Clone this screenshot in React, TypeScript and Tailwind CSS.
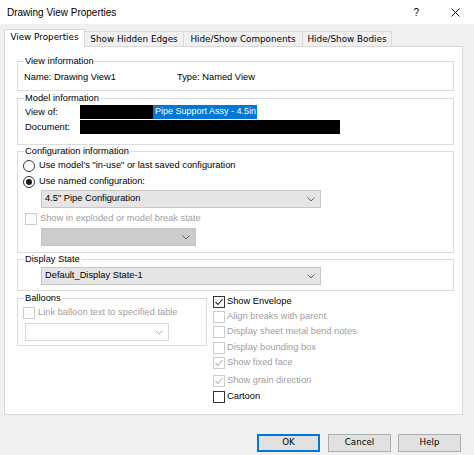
import type { ReactNode } from 'react';

const tabs = ['View Properties', 'Show Hidden Edges', 'Hide/Show Components', 'Hide/Show Bodies'];
const tabWidths = ['w-[81px]', 'w-[100px]', 'w-[120px]', 'w-[90px]'];

const options = [
  { label: 'Show Envelope', checked: true, disabled: false, gap: 'mt-0' },
  { label: 'Align breaks with parent', checked: false, disabled: true, gap: 'mt-[1px]' },
  { label: 'Display sheet metal bend notes', checked: false, disabled: true, gap: 'mt-[1px]' },
  { label: 'Display bounding box', checked: false, disabled: true, gap: 'mt-[2px]' },
  { label: 'Show fixed face', checked: true, disabled: true, gap: 'mt-[1px]' },
  { label: 'Show grain direction', checked: true, disabled: true, gap: 'mt-[4px]' },
  { label: 'Cartoon', checked: false, disabled: false, gap: 'mt-[2px]' },
];

function Chevron({ color = '#606060' }: { color?: string }) {
  return (
    <svg width="8" height="5" viewBox="0 0 8 5" className="shrink-0">
      <polyline points="0.5,0.5 4,4 7.5,0.5" fill="none" stroke={color} strokeWidth="1" />
    </svg>
  );
}

function CheckBox({ checked, disabled }: { checked: boolean; disabled: boolean }) {
  return (
    <span
      className={`flex h-[12px] w-[12px] shrink-0 items-center justify-center border bg-white ${
        disabled ? 'border-[#cccccc]' : 'border-[#333333]'
      }`}
    >
      {checked && (
        <svg width="10" height="10" viewBox="0 0 10 10">
          <polyline
            points="1.5,5 4,7.5 8.5,2"
            fill="none"
            stroke={disabled ? '#b5b5b5' : '#222'}
            strokeWidth="1.1"
          />
        </svg>
      )}
    </span>
  );
}

function Radio({ selected }: { selected: boolean }) {
  return (
    <span className="flex h-[12px] w-[12px] shrink-0 items-center justify-center rounded-full border border-[#333333] bg-white">
      {selected && <span className="h-[6px] w-[6px] rounded-full bg-[#1a1a1a]" />}
    </span>
  );
}

function Group({ title, className, children }: { title: string; className: string; children?: ReactNode }) {
  return (
    <fieldset className={`border border-[#dcdcdc] ${className}`}>
      <legend className="ml-[6px] px-[1px] leading-[12px]">{title}</legend>
      {children}
    </fieldset>
  );
}

function Select({ value, className }: { value?: string; className: string }) {
  return (
    <div className={`flex h-[18px] items-center justify-between border pl-[3px] pr-[5px] ${className}`}>
      <span>{value}</span>
      <Chevron />
    </div>
  );
}

export default function App() {
  return (
    <div className="flex h-[455px] w-[474px] flex-col overflow-hidden bg-[#f0f0f0] font-['Liberation_Sans',Arial,sans-serif] text-[9.3px] text-black">
      <div className="flex h-[24px] shrink-0 items-center bg-white pl-[7px] pr-[14px] text-[10px]">
        <span className="flex-1">Drawing View Properties</span>
        <span className="mr-[32px] text-[10px]">?</span>
        <svg width="9" height="9" viewBox="0 0 9 9">
          <path d="M0.5 0.5 L8.5 8.5 M8.5 0.5 L0.5 8.5" stroke="#111" strokeWidth="1" />
        </svg>
      </div>

      <div className="mt-[5px] flex h-[18px] items-end pl-[4px] font-['DejaVu_Sans',Verdana,sans-serif] text-[8.8px]">
        {tabs.map((t, i) =>
          i === 0 ? (
            <div
              key={t}
              className={`relative z-10 flex h-[18px] ${tabWidths[i]} items-center justify-center border border-b-0 border-[#d9d9d9] bg-white pb-[1px]`}
            >
              {t}
            </div>
          ) : (
            <div
              key={t}
              className={`-ml-[1px] flex h-[16px] ${tabWidths[i]} items-center justify-center border border-b-0 border-[#d9d9d9] bg-[#f0f0f0]`}
            >
              {t}
            </div>
          )
        )}
      </div>

      <div className="-mt-[1px] ml-[4px] flex h-[369px] w-[459px] flex-col border border-[#d9d9d9] bg-white pl-[12px] pr-[8px] pt-[8px]">
        <Group title="View information" className="h-[36px]">
          <div className="mt-[4px] flex h-[14px] items-center pl-[6px]">
            <span className="w-[153px]">Name: Drawing View1</span>
            <span>Type: Named View</span>
          </div>
        </Group>

        <Group title="Model information" className="mt-[1px] h-[53px]">
          <div className="flex h-[15px] items-center pl-[7px]">
            <span className="w-[55px] pt-[3px]">View of:</span>
            <span className="h-[14px] w-[73px] bg-black" />
            <span className="flex h-[14px] min-w-[104px] items-center whitespace-nowrap bg-[#0078d7] pl-[2px] pr-[1px] text-[9px] text-white">
              Pipe Support Assy - 4.5in
            </span>
          </div>
          <div className="flex h-[15px] items-center pl-[7px]">
            <span className="w-[55px] pt-[3px]">Document:</span>
            <span className="h-[14px] w-[260px] bg-black" />
          </div>
        </Group>

        <Group title="Configuration information" className="h-[108px]">
          <div className="mt-[2px] flex h-[14px] items-center gap-[4px] pl-[5px]">
            <Radio selected={false} />
            <span>Use model's "in-use" or last saved configuration</span>
          </div>
          <div className="mt-[2px] flex h-[14px] items-center gap-[4px] pl-[5px]">
            <Radio selected />
            <span>Use named configuration:</span>
          </div>
          <Select value={'4.5" Pipe Configuration'} className="ml-[23px] mt-[1px] w-[280px] border-[#c6c6c6] bg-[#e5e5e5]" />
          <div className="mt-[4px] flex h-[14px] items-center gap-[3px] pl-[7px] text-[#a0a0a0]">
            <CheckBox checked={false} disabled />
            <span>Show in exploded or model break state</span>
          </div>
          <Select className="ml-[23px] mt-[2px] w-[155px] border-[#c4c4c4] bg-[#cccccc]" />
        </Group>

        <Group title="Display State" className="h-[38px]">
          <Select value="Default_Display State-1" className="ml-[23px] mt-[2px] w-[280px] border-[#c6c6c6] bg-[#e5e5e5]" />
        </Group>

        <div className="mt-[1px] flex">
          <Group title="Balloons" className="h-[54px] w-[190px] shrink-0">
            <div className="mt-[2px] flex h-[14px] items-center gap-[3px] pl-[5px] text-[#a0a0a0]">
              <CheckBox checked={false} disabled />
              <span>Link balloon text to specified table</span>
            </div>
            <div className="ml-[7px] mt-[3px] flex h-[18px] w-[144px] items-center justify-end border border-[#d9d9d9] bg-white pr-[5px]">
              <Chevron color="#b0b0b0" />
            </div>
          </Group>

          <div className="ml-[6px] flex flex-col pt-[3px]">
            {options.map((o) => (
              <div
                key={o.label}
                className={`flex h-[14px] items-center gap-[2px] ${o.gap} ${o.disabled ? 'text-[#a0a0a0]' : ''}`}
              >
                <CheckBox checked={o.checked} disabled={o.disabled} />
                <span>{o.label}</span>
              </div>
            ))}
          </div>
        </div>
      </div>

      <div className="mt-[19px] flex justify-end pr-[13px] font-['DejaVu_Sans',Verdana,sans-serif] text-[8.7px]">
        <button className="flex h-[18px] w-[63px] items-center justify-center border-2 border-[#0078d7] bg-[#e1e1e1]">
          OK
        </button>
        <button className="ml-[8px] flex h-[18px] w-[63px] items-center justify-center border border-[#adadad] bg-[#e1e1e1]">
          Cancel
        </button>
        <button className="ml-[7px] flex h-[18px] w-[63px] items-center justify-center border border-[#adadad] bg-[#e1e1e1]">
          Help
        </button>
      </div>
    </div>
  );
}
